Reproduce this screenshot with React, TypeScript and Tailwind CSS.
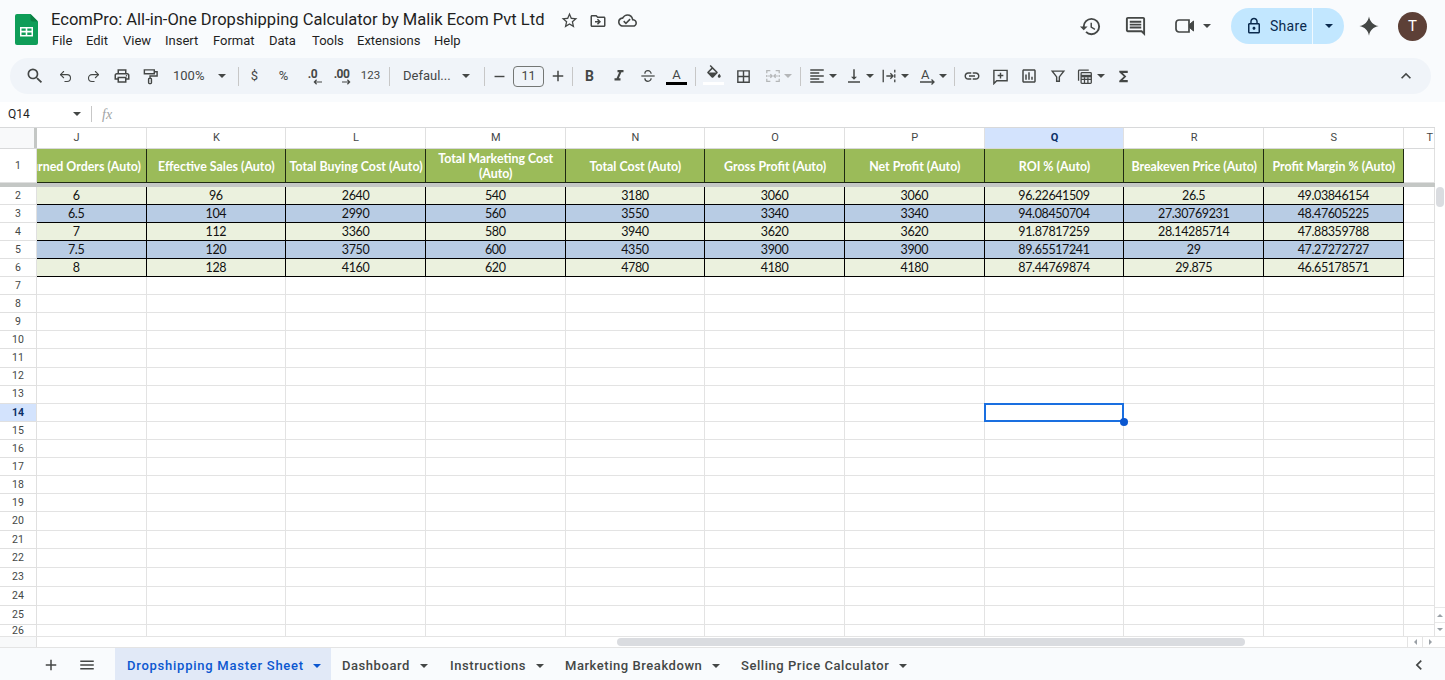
import * as React from "react"
import { Undo2, Redo2 } from "lucide-react"
import {
  MdSearch,
  MdOutlinePrint,
  MdFormatItalic,
  MdFormatColorFill,
  MdBorderAll,
  MdFormatAlignLeft,
  MdVerticalAlignBottom,
  MdLink,
  MdOutlineInsertChart,
  MdFunctions,
  MdHistory,
  MdOutlineComment,
  MdLockOutline,
  MdExpandLess,
  MdStarBorder,
  MdOutlineDriveFileMove,
  MdOutlineCloudDone,
  MdMenu,
  MdAdd,
  MdRemove,
  MdChevronLeft,
} from "react-icons/md"

const menus = [
  { label: "File", w: "w-[34px]" },
  { label: "Edit", w: "w-[37px]" },
  { label: "View", w: "w-[42px]" },
  { label: "Insert", w: "w-[48px]" },
  { label: "Format", w: "w-[56px]" },
  { label: "Data", w: "w-[43px]" },
  { label: "Tools", w: "w-[45px]" },
  { label: "Extensions", w: "w-[77px]" },
  { label: "Help", w: "w-[40px]" },
]

const letters = ["J", "K", "L", "M", "N", "O", "P", "Q", "R", "S"]

const headers = [
  "Returned Orders (Auto)",
  "Effective Sales (Auto)",
  "Total Buying Cost (Auto)",
  "Total Marketing Cost (Auto)",
  "Total Cost (Auto)",
  "Gross Profit (Auto)",
  "Net Profit (Auto)",
  "ROI % (Auto)",
  "Breakeven Price (Auto)",
  "Profit Margin % (Auto)",
]

const data = [
  ["6", "96", "2640", "540", "3180", "3060", "3060", "96.22641509", "26.5", "49.03846154"],
  ["6.5", "104", "2990", "560", "3550", "3340", "3340", "94.08450704", "27.30769231", "48.47605225"],
  ["7", "112", "3360", "580", "3940", "3620", "3620", "91.87817259", "28.14285714", "47.88359788"],
  ["7.5", "120", "3750", "600", "4350", "3900", "3900", "89.65517241", "29", "47.27272727"],
  ["8", "128", "4160", "620", "4780", "4180", "4180", "87.44769874", "29.875", "46.65178571"],
]

// row numbers and heights below the table, the grid drifts a little in the screenshot
const emptyRows = [
  { n: 7, h: "h-[18px]" },
  { n: 8, h: "h-[18.17px]" },
  { n: 9, h: "h-[18.17px]" },
  { n: 10, h: "h-[18.17px]" },
  { n: 11, h: "h-[18.17px]" },
  { n: 12, h: "h-[18.17px]" },
  { n: 13, h: "h-[18.17px]" },
  { n: 14, h: "h-[18px]" },
  { n: 15, h: "h-[18px]" },
  { n: 16, h: "h-[18px]" },
  { n: 17, h: "h-[18.3px]" },
  { n: 18, h: "h-[18px]" },
  { n: 19, h: "h-[18px]" },
  { n: 20, h: "h-[18.3px]" },
  { n: 21, h: "h-[18.7px]" },
  { n: 22, h: "h-[18.3px]" },
  { n: 23, h: "h-[19px]" },
  { n: 24, h: "h-[19px]" },
  { n: 25, h: "h-[19px]" },
  { n: 26, h: "h-[13px]" },
]

const tabs = [
  { label: "Dashboard", w: "w-[108px]" },
  { label: "Instructions", w: "w-[115px]" },
  { label: "Marketing Breakdown", w: "w-[176px]" },
  { label: "Selling Price Calculator", w: "w-[180px]" },
]

function Caret({ className = "ml-[2px] text-[#444746]" }: { className?: string }) {
  return (
    <svg viewBox="0 0 8 4" className={`w-2 h-1 shrink-0 fill-current ${className}`}>
      <path d="M0 0h8L4 4z" />
    </svg>
  )
}

function Sep({ className = "" }: { className?: string }) {
  return <div className={`w-px h-[19px] bg-[#c7c7c7] shrink-0 ${className}`} />
}

function Slot({ className = "w-[29px]", children }: { className?: string; children: React.ReactNode }) {
  return <div className={`h-full flex items-center justify-center shrink-0 ${className}`}>{children}</div>
}

function Drop({ className, children }: { className: string; children: React.ReactNode }) {
  return (
    <div className={`h-full flex items-center shrink-0 ${className}`}>
      <div className="w-5 flex items-center justify-center">{children}</div>
      <Caret />
    </div>
  )
}

function SheetsLogo() {
  return (
    <svg viewBox="0 0 23 31" className="w-[23px] h-[31px] shrink-0">
      <path d="M2 0h13.5L23 7.5V29a2 2 0 0 1-2 2H2a2 2 0 0 1-2-2V2a2 2 0 0 1 2-2z" fill="#0f9d58" />
      <path d="M15.500 0L23 7.500h-5.500a2 2 0 0 1-2-2z" fill="#0b8043" />
      <path d="M5 13h13v9.500H5z" fill="#fff" />
      <path d="M6.500 14.500h4.200v2.300H6.500zM12.300 14.500h4.200v2.300h-4.200zM6.500 18.400h4.200v2.600H6.500zM12.300 18.400h4.200v2.600h-4.200z" fill="#0f9d58" />
    </svg>
  )
}

function DecimalIcon({ label, dir }: { label: string; dir: "left" | "right" }) {
  return (
    <div className="relative h-[18px] w-[22px] text-[#444746]">
      <span className="absolute left-0 right-0 top-[-2px] text-center text-[12px] font-bold tracking-[-0.5px]">{label}</span>
      <svg viewBox="0 0 10 6" className="absolute right-[2px] bottom-0 w-[9px] h-[6px] fill-none stroke-current stroke-[1.3]">
        {dir === "left" ? <path d="M10 3H1.500M4 .5L1.500 3 4 5.500" /> : <path d="M0 3h8.500M6 .5L8.500 3 6 5.500" />}
      </svg>
    </div>
  )
}

function PaintIcon() {
  return (
    <svg viewBox="0 0 18 18" className="w-[17px] h-[17px] fill-none stroke-[#444746] stroke-[1.5]">
      <path d="M2.500 2h10.500v4H2.500zM13 4h3v4.500H8.500V11" />
      <rect x="7" y="11" width="3" height="5.500" rx=".8" />
    </svg>
  )
}

function StrikeIcon() {
  return (
    <svg viewBox="0 0 18 18" className="w-[16px] h-[16px] fill-none stroke-[#444746] stroke-[1.4]">
      <path d="M1.500 9h15" />
      <path d="M5.500 6.500a3.500 3.500 0 0 1 7 0M5.500 11.500a3.500 3.500 0 0 0 7 0" />
    </svg>
  )
}

function MergeIcon() {
  return (
    <svg viewBox="0 0 18 18" className="w-[16px] h-[16px] fill-none stroke-[#b4b6b8] stroke-[1.4]">
      <path d="M6 3H2v3M2 8v2M2 12v3h4M12 3h4v3M16 8v2M16 12v3h-4" />
      <path d="M3.500 9H8M6 7l2 2-2 2M14.500 9H10M12 7l-2 2 2 2" />
    </svg>
  )
}

function WrapIcon() {
  return (
    <svg viewBox="0 0 18 18" className="w-[16px] h-[16px] fill-none stroke-[#444746] stroke-[1.5]">
      <path d="M2.500 2v14M6 9h7M10.500 6l3 3-3 3" />
      <path d="M15.500 2v3M15.500 7v4M15.500 13v3" />
    </svg>
  )
}

function RotateIcon() {
  return (
    <div className="relative w-[16px] h-[18px] ml-[2px] text-[#444746]">
      <span className="absolute left-[1px] top-[-2px] text-[13px]">A</span>
      <svg viewBox="0 0 16 6" className="absolute left-0 bottom-0 w-[16px] h-[6px] fill-none stroke-current stroke-[1.3]">
        <path d="M0 3h14M11.500.5L14 3l-2.500 2.500" />
      </svg>
    </div>
  )
}

function AddCommentIcon() {
  return (
    <svg viewBox="0 0 18 18" className="w-[17px] h-[17px] fill-none stroke-[#444746] stroke-[1.5]">
      <path d="M2 2.500h14v11H5l-3 3zM9 5v6M6 8h6" />
    </svg>
  )
}

function FilterIcon() {
  return (
    <svg viewBox="0 0 18 18" className="w-[16px] h-[16px] fill-none stroke-[#444746] stroke-[1.6]">
      <path d="M2.500 3.500h13L10.500 10v5h-3v-5z" />
    </svg>
  )
}

function TableIcon() {
  return (
    <svg viewBox="0 0 20 20" className="w-[17px] h-[17px] fill-none stroke-[#444746] stroke-[1.5]">
      <path d="M3 15V3.500a1 1 0 0 1 1-1h11" />
      <rect x="6" y="5.500" width="12" height="12.500" rx="1" />
      <path d="M6 9.500h12" strokeWidth="3" />
      <path d="M6 13.500h12M10 11v7M14 11v7" />
    </svg>
  )
}

function VideoIcon() {
  return (
    <svg viewBox="0 0 24 24" className="w-[24px] h-[24px] fill-none stroke-[#444746] stroke-[1.7]">
      <path d="M3 9a3 3 0 0 1 3-3h10v12H6a3 3 0 0 1-3-3z" />
      <path d="M16.500 10.500l4-3.500v10l-4-3.500z" fill="#444746" strokeWidth="1" />
    </svg>
  )
}

function Spark() {
  return (
    <svg viewBox="0 0 24 24" className="w-[22px] h-[22px] fill-[#444746]">
      <path d="M12 1.500c.9 5.600 4.900 9.600 10.500 10.500-5.600.9-9.600 4.900-10.500 10.500C11.100 16.900 7.100 12.900 1.500 12 7.100 11.100 11.100 7.100 12 1.500z" />
    </svg>
  )
}

function TopBar() {
  return (
    <div className="h-[58px] shrink-0 flex items-start">
      <div className="ml-[15px] mt-[14px]">
        <SheetsLogo />
      </div>
      <div className="ml-[13px] mt-[9px] flex flex-col">
        <div className="flex items-center h-[23px]">
          <div className="w-[503.5px] text-[16.56px] text-[#1f1f1f] whitespace-nowrap">EcomPro: All-in-One Dropshipping Calculator by Malik Ecom Pvt Ltd</div>
          <div className="w-[29px] flex justify-center"><MdStarBorder className="w-[19px] h-[19px] text-[#444746]" /></div>
          <div className="w-[29px] flex justify-center"><MdOutlineDriveFileMove className="w-[18px] h-[18px] text-[#444746]" /></div>
          <div className="w-[29px] flex justify-center"><MdOutlineCloudDone className="w-[19px] h-[19px] text-[#444746]" /></div>
        </div>
        <div className="flex items-center h-[18px] ml-[1px] text-[13px] text-[#1f1f1f]">
          {menus.map((m) => (
            <div key={m.label} className={m.w}>{m.label}</div>
          ))}
        </div>
      </div>
      <div className="ml-auto mr-[18px] mt-[8px] h-9 flex items-center">
        <MdHistory className="w-[23px] h-[23px] text-[#444746]" />
        <MdOutlineComment className="ml-[22px] w-[23px] h-[23px] text-[#444746]" />
        <div className="ml-[26px]"><VideoIcon /></div>
        <Caret className="ml-[6px] text-[#444746]" />
        <div className="ml-[20px] h-9 w-[113px] flex rounded-full overflow-hidden bg-[#c2e7ff] text-[#0a2a4e]">
          <div className="w-[82px] flex items-center pl-[14px] border-r border-[#f0f9ff]">
            <MdLockOutline className="w-[18px] h-[18px]" />
            <span className="ml-[7px] text-[14px] tracking-[0.3px]">Share</span>
          </div>
          <div className="flex-1 flex items-center justify-center">
            <Caret className="text-[#0a2a4e]" />
          </div>
        </div>
        <div className="ml-[14px]"><Spark /></div>
        <div className="ml-[18px] w-[29px] h-[29px] rounded-full bg-[#5d4037] text-white text-[15px] flex items-center justify-center">T</div>
      </div>
    </div>
  )
}

function Toolbar() {
  return (
    <div className="ml-[10px] mr-[14px] h-9 shrink-0 rounded-full bg-[#f0f4f9] flex items-center pl-[10px] text-[#444746]">
      <Slot><MdSearch className="w-[20px] h-[20px]" /></Slot>
      <Slot className="w-[28.5px] ml-[2px]"><Undo2 className="w-[15px] h-[15px]" strokeWidth={1.7} /></Slot>
      <Slot className="w-[28.5px]"><Redo2 className="w-[15px] h-[15px]" strokeWidth={1.7} /></Slot>
      <Slot className="w-[28.5px]"><MdOutlinePrint className="w-[18px] h-[18px]" /></Slot>
      <Slot className="w-[28.5px]"><PaintIcon /></Slot>
      <div className="w-[66px] h-full flex items-center pl-2 shrink-0 text-[13px]">
        <span className="w-[44px]">100%</span>
        <Caret className="ml-[1px] text-[#444746]" />
      </div>
      <Sep className="ml-[7px]" />
      <Slot className="w-[29px] ml-px"><span className="text-[13px]">$</span></Slot>
      <Slot><span className="text-[13px]">%</span></Slot>
      <Slot><DecimalIcon label=".0" dir="left" /></Slot>
      <Slot><DecimalIcon label=".00" dir="right" /></Slot>
      <Slot><span className="text-[11.5px]">123</span></Slot>
      <Sep className="ml-1" />
      <div className="w-[87px] h-full flex items-center pl-[13px] shrink-0 text-[13px]">
        <span className="w-[60px] whitespace-nowrap">Defaul...</span>
        <Caret className="ml-[-1px] text-[#444746]" />
      </div>
      <Sep className="ml-[7px]" />
      <Slot className="w-[28px]"><MdRemove className="w-[17px] h-[17px]" /></Slot>
      <div className="w-[31px] h-[21px] shrink-0 border border-[#747775] rounded-[4px] text-[12.5px] flex items-center justify-center">11</div>
      <Slot className="w-[27px]"><MdAdd className="w-[18px] h-[18px]" /></Slot>
      <Sep className="ml-px" />
      <Slot className="w-[29px] ml-[2px]"><span className="text-[14px] font-bold">B</span></Slot>
      <Slot><MdFormatItalic className="w-[18px] h-[18px]" /></Slot>
      <Slot><StrikeIcon /></Slot>
      <Slot>
        <div className="flex flex-col items-center w-[21px]">
          <span className="text-[13px] leading-[15px]">A</span>
          <div className="w-[21px] h-[3px] bg-black" />
        </div>
      </Slot>
      <Sep className="ml-1" />
      <Slot className="w-[29px] ml-[3px]">
        <div className="flex flex-col items-center w-[21px] mt-[-2px]">
          <div className="h-[15px] w-[18px] overflow-hidden">
            <MdFormatColorFill className="w-[18px] h-[18px]" />
          </div>
          <div className="w-[21px] h-[3px] mt-[2px] bg-white" />
        </div>
      </Slot>
      <Slot className="w-[30px]"><MdBorderAll className="w-[17px] h-[17px]" /></Slot>
      <div className="w-[41px] h-full flex items-center pl-[7px] shrink-0">
        <MergeIcon />
        <Caret className="ml-[3px] text-[#b4b6b8]" />
      </div>
      <Sep className="ml-px" />
      <div className="w-[6px] shrink-0" />
      <Drop className="w-[37px]"><MdFormatAlignLeft className="w-[18px] h-[18px]" /></Drop>
      <Drop className="w-[35px]"><MdVerticalAlignBottom className="w-[18px] h-[18px]" /></Drop>
      <Drop className="w-[38px]"><WrapIcon /></Drop>
      <Drop className="w-[37px]"><RotateIcon /></Drop>
      <Sep />
      <Slot className="w-[28.5px] ml-[3px]"><MdLink className="w-[18px] h-[18px]" /></Slot>
      <Slot className="w-[28.5px]"><AddCommentIcon /></Slot>
      <Slot className="w-[28.5px]"><MdOutlineInsertChart className="w-[18px] h-[18px]" /></Slot>
      <Slot className="w-[28.5px]"><FilterIcon /></Slot>
      <div className="w-[33px] h-full flex items-center shrink-0 pl-[2px]">
        <div className="w-5 flex justify-center"><TableIcon /></div>
        <Caret className="ml-[3px] text-[#444746]" />
      </div>
      <Slot className="w-[29px] ml-1"><MdFunctions className="w-[17px] h-[17px]" /></Slot>
      <Slot className="w-[29px] ml-auto mr-[11px]"><MdExpandLess className="w-[20px] h-[20px]" /></Slot>
    </div>
  )
}

function FormulaBar() {
  return (
    <div className="mt-2 h-[25px] pb-px shrink-0 bg-white flex items-center text-[#444746]">
      <span className="ml-2 w-[65px] text-[12px] text-[#1f1f1f]">Q14</span>
      <Caret className="ml-0 text-[#444746]" />
      <div className="ml-[10px] w-px h-4 bg-[#c7c7c7]" />
      <span className="ml-[10px] text-[14px] italic text-[#a0a3a5] font-['Liberation_Serif',serif]">fx</span>
    </div>
  )
}

function ColumnHeader() {
  return (
    <div className="h-[22px] flex border-y border-[#d8d9da] shrink-0 bg-white">
      <div className="w-[37px] shrink-0 bg-[#f8f9fa] border-r-[3px] border-[#c4c7c5]" />
      {letters.map((l) => (
        <div
          key={l}
          className={`${l === "J" ? "w-[109.5px]" : "w-[139.7px]"} shrink-0 overflow-hidden flex justify-end border-r border-[#e0e0e0] text-[11px] ${l === "Q" ? "bg-[#d3e3fd] text-[#0b2f66] font-bold" : "text-[#444746]"}`}
        >
          <div className="w-[139.7px] shrink-0 flex items-center justify-center pl-[2px]">{l}</div>
        </div>
      ))}
      <div className="flex-1 overflow-hidden border-r border-[#e0e0e0] flex items-center justify-end pr-[1px] text-[11px] text-[#444746]">T</div>
    </div>
  )
}

function RowNum({ n }: { n: number }) {
  return (
    <div className={`w-[37px] shrink-0 border-r border-b border-[#e0e0e0] flex items-center justify-center text-[10.5px] ${n === 14 ? "bg-[#d3e3fd] text-[#0b2f66] font-bold" : "bg-white text-[#444746]"}`}>
      {n}
    </div>
  )
}

function TitleRow() {
  return (
    <div className="h-[34px] flex shrink-0">
      <RowNum n={1} />
      {headers.map((h, i) => (
        <div
          key={h}
          className={`${i === 0 ? "w-[109.5px]" : "w-[139.7px]"} shrink-0 overflow-hidden flex justify-end bg-[#9bbb59] border-r border-b border-[#1f2a12]`}
        >
          <div className="w-[139.7px] shrink-0 flex items-center justify-center text-center text-white font-bold text-[12.4px] leading-[15px] font-['Lato',sans-serif] pl-[2px] pt-[1px]">
            {h}
          </div>
        </div>
      ))}
      <div className="flex-1 border-r border-b border-[#e0e0e0]" />
    </div>
  )
}

function DataRow({ n, cells }: { n: number; cells: string[] }) {
  const bg = n % 2 === 0 ? "bg-[#ebf1de]" : "bg-[#b8cce4]"
  return (
    <div className="h-[18px] flex shrink-0">
      <RowNum n={n} />
      {cells.map((c, i) => (
        <div
          key={i}
          className={`${i === 0 ? "w-[109.5px]" : "w-[139.7px]"} shrink-0 overflow-hidden flex justify-end ${bg} border-r border-b border-black`}
        >
          <div className="w-[139.7px] shrink-0 flex items-center justify-center pl-[1px] pt-[2px] text-[#111] text-[12.5px] tracking-[-0.38px] font-['Lato',sans-serif]">{c}</div>
        </div>
      ))}
      <div className="flex-1 border-r border-b border-[#e0e0e0]" />
    </div>
  )
}

function EmptyRow({ n, h }: { n: number; h: string }) {
  return (
    <div className={`${h} flex shrink-0`}>
      <RowNum n={n} />
      {letters.map((l) => (
        <div
          key={l}
          className={`${l === "J" ? "w-[109.5px]" : "w-[139.7px]"} shrink-0 relative border-r border-b border-[#e3e3e3]`}
        >
          {n === 14 && l === "Q" && (
            <div className="absolute z-10 left-[-1px] right-[-1px] top-[-1px] bottom-[-1px] border-2 border-[#1a6fe0]">
              <div className="absolute right-[-6px] bottom-[-6px] w-2 h-2 rounded-full bg-[#0b57d0]" />
            </div>
          )}
        </div>
      ))}
      <div className="flex-1 border-r border-b border-[#e3e3e3]" />
    </div>
  )
}

function Grid() {
  return (
    <div className="flex-1 min-h-0 flex bg-white">
      <div className="flex-1 min-w-0 flex flex-col overflow-hidden">
        <ColumnHeader />
        <TitleRow />
        <div className="h-1 bg-[#c4c7c5] shrink-0" />
        {data.map((cells, i) => (
          <DataRow key={i} n={i + 2} cells={cells} />
        ))}
        {emptyRows.map((r) => (
          <EmptyRow key={r.n} n={r.n} h={r.h} />
        ))}
      </div>
      <div className="w-[10px] shrink-0 flex flex-col bg-white">
        <div className="h-[60px] shrink-0 relative">
          <div className="absolute left-[1px] right-[1px] top-[60px] h-5 rounded-full bg-[#dadce0]" />
        </div>
        <div className="mt-auto border-t border-[#e8e8e8] h-[15px] flex items-center justify-center">
          <svg viewBox="0 0 8 4" className="w-[6px] h-[3px] fill-[#9aa0a6]"><path d="M0 4h8L4 0z" /></svg>
        </div>
        <div className="border-t border-[#e8e8e8] h-[14px] flex items-center justify-center">
          <svg viewBox="0 0 8 4" className="w-[6px] h-[3px] fill-[#9aa0a6]"><path d="M0 0h8L4 4z" /></svg>
        </div>
      </div>
    </div>
  )
}

function HScroll() {
  return (
    <div className="h-3 shrink-0 flex bg-white border-t border-b border-[#e4e4e4]">
      <div className="w-[37px] shrink-0 bg-[#f8f9fa] border-r border-[#e0e0e0]" />
      <div className="w-[580px] shrink-0" />
      <div className="w-[628px] my-px rounded-full bg-[#dadce0] shrink-0" />
      <div className="w-[162px] shrink-0" />
      <div className="w-[15px] border-l border-[#e4e4e4] flex items-center justify-center shrink-0">
        <svg viewBox="0 0 4 8" className="w-[3px] h-[6px] fill-[#9aa0a6]"><path d="M4 0v8L0 4z" /></svg>
      </div>
      <div className="w-[15px] border-l border-[#e4e4e4] flex items-center justify-center shrink-0">
        <svg viewBox="0 0 4 8" className="w-[3px] h-[6px] fill-[#9aa0a6]"><path d="M0 0v8l4-4z" /></svg>
      </div>
    </div>
  )
}

function TabBar() {
  return (
    <div className="h-8 shrink-0 bg-[#f9fbfd] flex items-center text-[13px] font-medium tracking-[0.55px] text-[#444746]">
      <div className="ml-[42px] w-[18px] pt-[2px] flex justify-center"><MdAdd className="w-[18px] h-[18px]" /></div>
      <div className="ml-[18px] w-[18px] pt-[2px] flex justify-center"><MdMenu className="w-[18px] h-[18px]" /></div>
      <div className="ml-[19px] w-[216px] h-full pt-[3px] bg-[#e1e9f7] flex items-center pl-3 text-[#0b57d0] tracking-[0.75px]">
        <span className="w-[186px] whitespace-nowrap">Dropshipping Master Sheet</span>
        <Caret className="text-[#0b57d0]" />
      </div>
      <div className="ml-[11px] pt-[3px] flex items-center">
        {tabs.map((t) => (
          <div key={t.label} className={`${t.w} flex items-center`}>
            <span className="whitespace-nowrap">{t.label}</span>
            <Caret className="ml-[10px] text-[#444746]" />
          </div>
        ))}
      </div>
      <div className="ml-auto mr-[16px] pt-[2px]"><MdChevronLeft className="w-5 h-5" /></div>
    </div>
  )
}

export default function App() {
  return (
    <div className="h-screen w-full overflow-hidden flex flex-col bg-[#f9fbfd] font-['Roboto',sans-serif]">
      <TopBar />
      <Toolbar />
      <FormulaBar />
      <Grid />
      <HScroll />
      <TabBar />
    </div>
  )
}
